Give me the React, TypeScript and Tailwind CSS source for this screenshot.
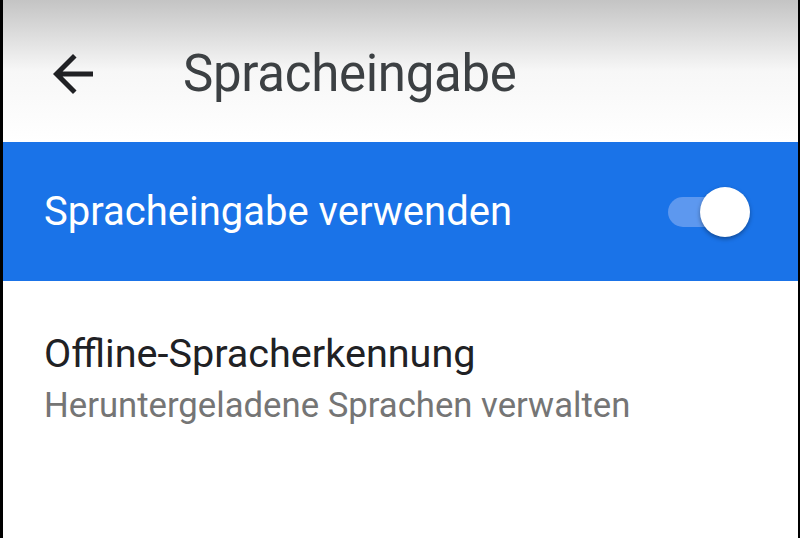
export default function App() {
  return (
    <div
      className="flex h-[538px] w-[800px] flex-col overflow-hidden border-l-[3px] border-r-[2px] border-black bg-white"
      style={{ fontFamily: 'Roboto, "Noto Sans", sans-serif' }}
    >
      {/* Toolbar */}
      <div className="flex h-[142px] items-center bg-gradient-to-b from-[#c4c4c4] via-[#f7f7f7] via-50% to-white pt-[6px]">
        <svg
          viewBox="0 0 24 24"
          className="ml-[40px] h-[60px] w-[60px] text-[#202124]"
          fill="currentColor"
        >
          <path d="M20 11H7.83l5.59-5.59L12 4l-8 8 8 8 1.41-1.41L7.83 13H20v-2z" />
        </svg>
        <h1 className="ml-[80px] text-[51px] font-normal tracking-[-0.3px] text-[#3c4043]">
          Spracheingabe
        </h1>
      </div>

      {/* Main switch */}
      <div className="flex h-[139px] items-center justify-between bg-[#1a73e8] pl-[41px] pr-[48px]">
        <span className="text-[40px] text-white">Spracheingabe verwenden</span>
        <div className="relative h-[50px] w-[84px]">
          <div className="absolute left-[2px] top-[10px] h-[30px] w-[68px] rounded-full bg-[#5d98ef]" />
          <div className="absolute right-0 top-0 h-[50px] w-[50px] rounded-full bg-white shadow-[0_2px_4px_rgba(0,0,0,0.35)]" />
        </div>
      </div>

      {/* Offline item */}
      <div className="flex flex-col gap-[6px] pl-[41px] pt-[48px]">
        <span className="text-[39.6px] leading-tight text-[#202124]">Offline-Spracherkennung</span>
        <span className="text-[34.7px] leading-tight text-[#757575]">
          Heruntergeladene Sprachen verwalten
        </span>
      </div>
    </div>
  );
}
